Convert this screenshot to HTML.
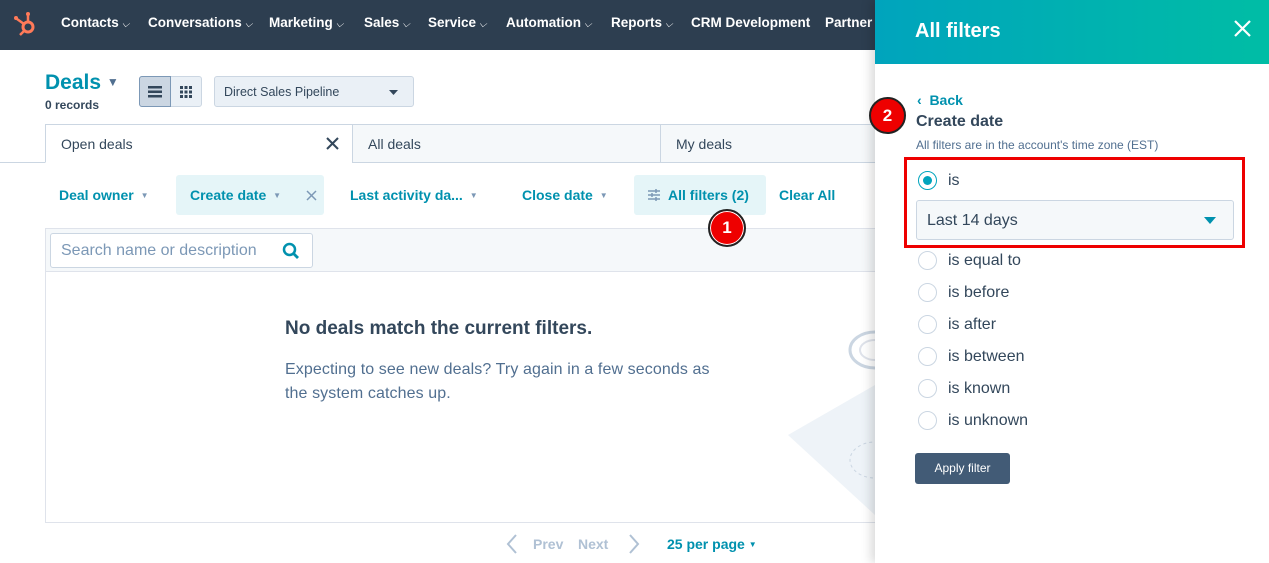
<!DOCTYPE html>
<html><head><style>
*{box-sizing:border-box;margin:0;padding:0}
body{width:1269px;height:563px;overflow:hidden;position:relative;font-family:"Liberation Sans",sans-serif;background:#fff;color:#33475b}
.a{position:absolute}
.nav{left:0;top:0;width:1269px;height:50px;background:#2d3e50}
.nav span{position:absolute;top:15px;color:#fff;font-weight:bold;font-size:13.5px}
.chev{font-weight:normal;font-size:10px;margin-left:3px}
.tab{top:124px;height:39px;border:1px solid #cbd6e2;font-size:14px;padding:11px 15px}
.fl{top:175px;height:40px;font-size:14px;font-weight:bold;color:#0091ae;padding:12px 14px}
.car{font-size:8px;color:#7c98b6;position:relative;top:-2px;margin-left:3px}
.radio{width:19px;height:19px;border:1.5px solid #cbd6e2;border-radius:50%;left:918px}
.rl{left:948px;font-size:16px;color:#33475b}
</style></head><body>
<div class="a nav">
<svg class="a" style="left:12px;top:10px" width="28" height="28" viewBox="0 0 28 28"><circle cx="16" cy="17" r="5" fill="none" stroke="#ff7a59" stroke-width="3"/><line x1="16" y1="12" x2="16" y2="5" stroke="#ff7a59" stroke-width="2.5"/><circle cx="16" cy="4" r="2" fill="#ff7a59"/><line x1="12" y1="14" x2="5" y2="9" stroke="#ff7a59" stroke-width="2.5"/><circle cx="4" cy="8" r="2" fill="#ff7a59"/><line x1="12" y1="21" x2="8" y2="25" stroke="#ff7a59" stroke-width="2.5"/></svg>
<span style="left:61px">Contacts<i class="chev">⌵</i></span>
<span style="left:148px">Conversations<i class="chev">⌵</i></span>
<span style="left:269px">Marketing<i class="chev">⌵</i></span>
<span style="left:364px">Sales<i class="chev">⌵</i></span>
<span style="left:428px">Service<i class="chev">⌵</i></span>
<span style="left:506px">Automation<i class="chev">⌵</i></span>
<span style="left:611px">Reports<i class="chev">⌵</i></span>
<span style="left:691px">CRM Development</span>
<span style="left:825px">Partner</span>
</div>
<div class="a" style="left:45px;top:71px;font-size:21px;font-weight:bold;color:#0091ae">Deals <span style="font-size:12px;color:#516f90;position:relative;top:-3px">▼</span></div>
<div class="a" style="left:45px;top:98px;font-size:12px;font-weight:bold">0 records</div>
<div class="a" style="left:139px;top:76px;width:63px;height:31px;border:1px solid #cbd6e2;border-radius:3px;background:#eaf0f6"></div>
<div class="a" style="left:139px;top:76px;width:32px;height:31px;border:1px solid #7c98b6;border-radius:3px 0 0 3px;background:#cbd6e2"></div>
<svg class="a" style="left:148px;top:86px" width="14" height="12"><rect x="0" y="0" width="14" height="2.5" fill="#33475b"/><rect x="0" y="4.5" width="14" height="2.5" fill="#33475b"/><rect x="0" y="9" width="14" height="2.5" fill="#33475b"/></svg>
<svg class="a" style="left:180px;top:86px" width="12" height="12" fill="#33475b"><rect x="0" y="0" width="3" height="3"/><rect x="4.5" y="0" width="3" height="3"/><rect x="9" y="0" width="3" height="3"/><rect x="0" y="4.5" width="3" height="3"/><rect x="4.5" y="4.5" width="3" height="3"/><rect x="9" y="4.5" width="3" height="3"/><rect x="0" y="9" width="3" height="3"/><rect x="4.5" y="9" width="3" height="3"/><rect x="9" y="9" width="3" height="3"/></svg>
<div class="a" style="left:214px;top:76px;width:200px;height:31px;border:1px solid #cbd6e2;border-radius:3px;background:#eaf0f6;font-size:12.5px;padding:8px 9px">Direct Sales Pipeline<svg class="a" style="right:15px;top:13px" width="9" height="5"><polygon points="0,0 9,0 4.5,5" fill="#33475b"/></svg></div>
<div class="a" style="left:0;top:162px;width:875px;height:1px;background:#cbd6e2"></div>
<div class="a tab" style="left:45px;width:308px;background:#fff;border-bottom-color:#fff">Open deals<svg class="a" style="right:13px;top:12px" width="13" height="13" stroke="#33475b" stroke-width="2"><line x1="1" y1="1" x2="12" y2="12"/><line x1="12" y1="1" x2="1" y2="12"/></svg></div>
<div class="a tab" style="left:352px;width:309px;background:#f5f8fa">All deals</div>
<div class="a tab" style="left:660px;width:230px;background:#f5f8fa">My deals</div>
<div class="a fl" style="left:45px">Deal owner <span class="car">▼</span></div>
<div class="a fl" style="left:176px;width:148px;background:#e5f5f8;border-radius:3px">Create date <span class="car">▼</span><svg class="a" style="right:7px;top:15px" width="11" height="11" stroke="#7c98b6" stroke-width="1.5"><line x1="1" y1="1" x2="10" y2="10"/><line x1="10" y1="1" x2="1" y2="10"/></svg></div>
<div class="a fl" style="left:336px">Last activity da... <span class="car">▼</span></div>
<div class="a fl" style="left:508px">Close date <span class="car">▼</span></div>
<div class="a fl" style="left:634px;width:132px;background:#e5f5f8;border-radius:3px;padding-left:34px">All filters (2)<svg class="a" style="left:13px;top:13px" width="14" height="14" viewBox="0 0 14 14" stroke="#7c98b6" stroke-width="1.5"><line x1="1" y1="3" x2="13" y2="3"/><line x1="1" y1="7" x2="13" y2="7"/><line x1="1" y1="11" x2="13" y2="11"/><line x1="9" y1="1" x2="9" y2="5"/><line x1="5" y1="5" x2="5" y2="9"/><line x1="9" y1="9" x2="9" y2="13"/></svg></div>
<div class="a fl" style="left:765px">Clear All</div>
<div class="a" style="left:45px;top:228px;width:840px;height:295px;border:1px solid #dfe3eb"></div>
<div class="a" style="left:46px;top:229px;width:830px;height:43px;background:#f5f8fa;border-bottom:1px solid #dfe3eb"></div>
<div class="a" style="left:50px;top:233px;width:263px;height:35px;border:1px solid #cbd6e2;border-radius:3px;background:#fff;font-size:16px;color:#7c98b6;padding:8px 10px">Search name or description<svg class="a" style="right:12px;top:8px" width="18" height="18" viewBox="0 0 18 18"><circle cx="7.5" cy="7.5" r="5.5" fill="none" stroke="#0091ae" stroke-width="2.5"/><line x1="11.5" y1="11.5" x2="16" y2="16" stroke="#0091ae" stroke-width="2.8"/></svg></div>
<div class="a" style="left:708px;top:209px;width:38px;height:38px;border-radius:50%;background:#e00;border:2px solid #222;box-shadow:0 0 0 1px #fff inset;color:#fff;font-weight:bold;font-size:17px;text-align:center;line-height:34px">1</div>
<div class="a" style="left:285px;top:318px;font-size:19px;font-weight:bold">No deals match the current filters.</div>
<div class="a" style="left:285px;top:358px;width:445px;font-size:16px;line-height:24px;color:#516f90;letter-spacing:0.1px">Expecting to see new deals? Try again in a few seconds as the system catches up.</div>
<svg class="a" style="left:785px;top:320px" width="90" height="200" viewBox="0 0 90 200"><polygon points="3,115 90,65 90,195" fill="#eef3f8"/><ellipse cx="90" cy="30" rx="25" ry="18" fill="#fff" stroke="#cbd6e2" stroke-width="3"/><ellipse cx="90" cy="30" rx="15" ry="10" fill="none" stroke="#dfe3eb" stroke-width="2"/><ellipse cx="90" cy="140" rx="25" ry="18" fill="none" stroke="#cbd6e2" stroke-dasharray="3 3"/></svg>
<svg class="a" style="left:506px;top:534px" width="12" height="20" stroke="#b0c1d4" stroke-width="2" fill="none"><polyline points="10,1 2,10 10,19"/></svg>
<div class="a" style="left:533px;top:536px;font-size:14px;font-weight:bold;color:#b0c1d4">Prev</div>
<div class="a" style="left:578px;top:536px;font-size:14px;font-weight:bold;color:#b0c1d4">Next</div>
<svg class="a" style="left:628px;top:534px" width="12" height="20" stroke="#b0c1d4" stroke-width="2" fill="none"><polyline points="2,1 10,10 2,19"/></svg>
<div class="a" style="left:667px;top:536px;font-size:14px;font-weight:bold;color:#0091ae">25 per page <span style="font-size:8px;position:relative;top:-2px">▼</span></div>
<!-- panel -->
<div class="a" style="left:875px;top:0;width:394px;height:563px;background:#fff;box-shadow:-4px 0 10px rgba(0,0,0,.15)"></div>
<div class="a" style="left:875px;top:0;width:394px;height:64px;background:linear-gradient(90deg,#00a4bd,#00bda5)"></div>
<div class="a" style="left:915px;top:20px;font-size:20px;font-weight:bold;color:#fff">All filters</div>
<svg class="a" style="left:1234px;top:20px" width="17" height="17" stroke="#fff" stroke-width="2.2"><line x1="1" y1="1" x2="16" y2="16"/><line x1="16" y1="1" x2="1" y2="16"/></svg>
<div class="a" style="left:917px;top:92px;font-size:14px;font-weight:bold;color:#0091ae">‹&nbsp; Back</div>
<div class="a" style="left:916px;top:113px;font-size:16px;font-weight:bold">Create date</div>
<div class="a" style="left:916px;top:138px;font-size:12px;color:#516f90">All filters are in the account's time zone (EST)</div>
<div class="a" style="left:869px;top:97px;width:37px;height:37px;border-radius:50%;background:#e00;border:2px solid #222;color:#fff;font-weight:bold;font-size:17px;text-align:center;line-height:33px">2</div>
<div class="a" style="left:904px;top:157px;width:341px;height:91px;border:3px solid #e00"></div>
<div class="a radio" style="top:171px;border-color:#00a4bd"><div style="margin:3.5px;width:9px;height:9px;border-radius:50%;background:#00a4bd"></div></div>
<div class="a rl" style="top:172px">is</div>
<div class="a" style="left:916px;top:200px;width:318px;height:40px;border:1px solid #cbd6e2;border-radius:3px;background:#f5f8fa;font-size:16px;padding:11px 10px">Last 14 days<svg class="a" style="right:17px;top:16px" width="12" height="7"><polygon points="0,0 12,0 6,7" fill="#0091ae"/></svg></div>
<div class="a radio" style="top:251px"></div><div class="a rl" style="top:252px">is equal to</div>
<div class="a radio" style="top:283px"></div><div class="a rl" style="top:284px">is before</div>
<div class="a radio" style="top:315px"></div><div class="a rl" style="top:316px">is after</div>
<div class="a radio" style="top:347px"></div><div class="a rl" style="top:348px">is between</div>
<div class="a radio" style="top:379px"></div><div class="a rl" style="top:380px">is known</div>
<div class="a radio" style="top:411px"></div><div class="a rl" style="top:412px">is unknown</div>
<div class="a" style="left:915px;top:453px;width:95px;height:31px;background:#425b76;border-radius:3px;color:#fff;font-size:12px;text-align:center;line-height:31px">Apply filter</div>
</body></html>
